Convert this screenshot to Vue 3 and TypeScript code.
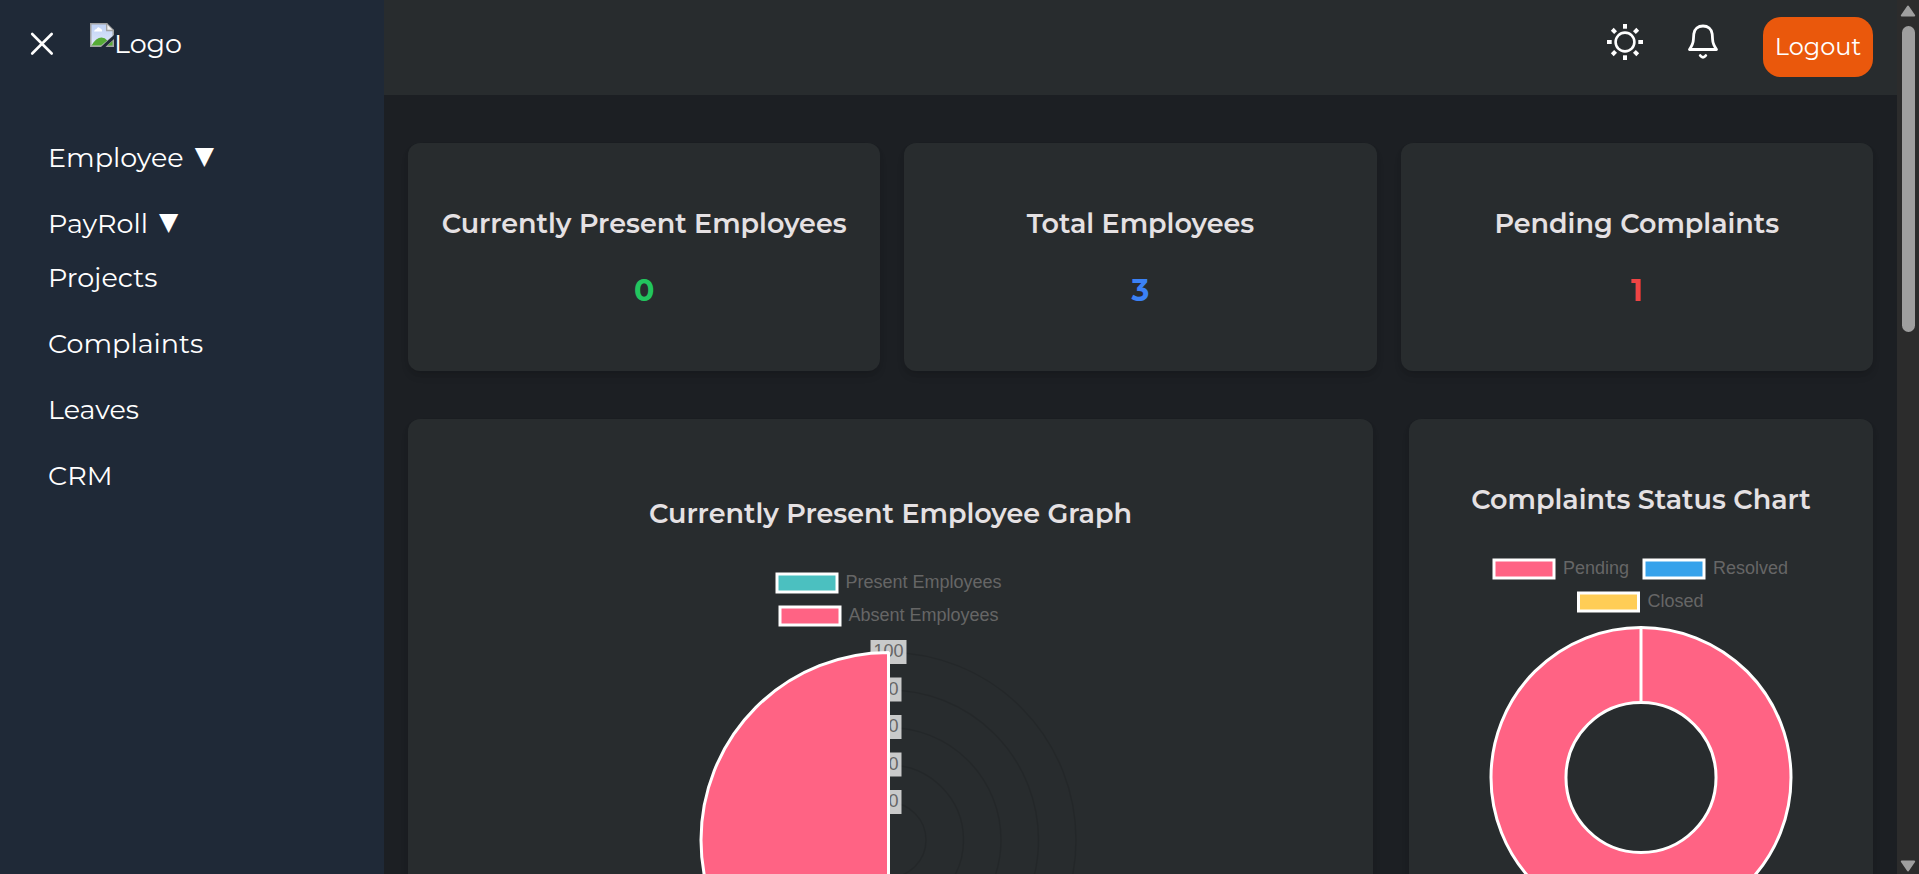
<script setup lang="ts">
interface NavItem {
  label: string
  expandable: boolean
}

interface Stat {
  title: string
  value: number
  tone: 'green' | 'blue' | 'red'
}

interface LegendEntry {
  label: string
  color: string
  x: number
  y: number
}

const navItems: NavItem[] = [
  { label: 'Employee', expandable: true },
  { label: 'PayRoll', expandable: true },
  { label: 'Projects', expandable: false },
  { label: 'Complaints', expandable: false },
  { label: 'Leaves', expandable: false },
  { label: 'CRM', expandable: false },
]

const stats: Stat[] = [
  { title: 'Currently Present Employees', value: 0, tone: 'green' },
  { title: 'Total Employees', value: 3, tone: 'blue' },
  { title: 'Pending Complaints', value: 1, tone: 'red' },
]

const attendanceLegend: LegendEntry[] = [
  { label: 'Present Employees', color: '#4bc0c0', x: 89, y: 16 },
  { label: 'Absent Employees', color: '#ff6384', x: 92, y: 49 },
]

const complaintLegend: LegendEntry[] = [
  { label: 'Pending', color: '#ff6384', x: 34, y: 16 },
  { label: 'Resolved', color: '#36a2eb', x: 184, y: 16 },
  { label: 'Closed', color: '#ffcd56', x: 118.5, y: 49 },
]

const gridRadii: number[] = [37.5, 75, 112.5, 150, 187.5]

const ticks = [100, 80, 60, 40, 20].map((value, i) => ({
  value,
  y: 94 + i * 37.5,
  width: value === 100 ? 36 : 26,
}))

const rays: number[] = [0, 45, 90, 135, 180, 225, 270, 315]
</script>

<template>
  <div class="window">
    <aside class="sidebar">
      <div class="brand">
        <svg class="close" viewBox="0 0 24 24">
          <path d="M2.200 2 L21.700 21.500 M21.700 2 L2.200 21.500" />
        </svg>
        <span class="logo">
          <svg class="broken" viewBox="0 0 24 24">
            <defs>
              <linearGradient id="sky" x1="0" y1="0" x2="0" y2="1">
                <stop offset="0" stop-color="#bfd2f5" />
                <stop offset="1" stop-color="#dfe8fa" />
              </linearGradient>
            </defs>
            <path d="M0 0H17L24 7V12L11 24H0Z" fill="#a3a3a3" />
            <path d="M1.500 1.500H16.500V8H22.500V13L11 22.500H1.500Z" fill="url(#sky)" />
            <path d="M4 8.500Q4.500 6 6.500 6Q8 3 10 5.200Q12.500 6 12 8.500Z" fill="#fff" />
            <path d="M1.500 22.500Q6 14.500 11.500 14.500Q15 14.500 17.300 17.500L11 22.500Z" fill="#57ab37" />
            <path d="M17 1.500V7H22.500Z" fill="#f3f3f3" />
            <path d="M16.700 0V7.500H24" fill="none" stroke="#a3a3a3" stroke-width="1.300" />
            <path d="M24 16V24H15.500L18 21.500Z" fill="#a3a3a3" />
            <path d="M22.500 18V22.500H17.500Z" fill="#57ab37" />
          </svg>
          <span class="alt">Logo</span>
        </span>
      </div>
      <nav class="nav">
        <a
          v-for="item in navItems"
          :key="item.label"
          class="nav-item"
          :class="{ tight: item.label === 'PayRoll' }"
        >
          <span>{{ item.label }}</span>
          <span v-if="item.expandable" class="caret">▼</span>
        </a>
      </nav>
    </aside>

    <div class="main">
      <header class="topbar">
        <svg class="sun" viewBox="-18 -18 36 36">
          <circle r="9.400" />
          <path v-for="angle in rays" :key="angle" d="M0 -13.300V-18" :transform="`rotate(${angle})`" />
        </svg>
        <svg class="bell" viewBox="0 0 30 36">
          <path
            d="M1.500 25.500H28.500C26.500 22.500 24.700 19.500 24.600 15.500L24.200 10C23.700 5 19.800 2 15 2S6.300 5 5.800 10L5.400 15.500C5.300 19.500 3.500 22.500 1.500 25.500Z"
          />
          <path d="M12.200 31.500Q15 35 17.800 31.500" />
        </svg>
        <button class="logout">Logout</button>
      </header>

      <main class="content">
        <section class="stats">
          <article v-for="stat in stats" :key="stat.title" class="card stat">
            <h2>{{ stat.title }}</h2>
            <p class="value" :class="stat.tone">{{ stat.value }}</p>
          </article>
        </section>

        <section class="charts">
          <article class="card chart-card attendance">
            <h2>Currently Present Employee Graph</h2>
            <svg class="polar" viewBox="0 0 405 500">
              <g v-for="entry in attendanceLegend" :key="entry.label">
                <rect class="swatch" :x="entry.x" :y="entry.y" width="60" height="18" :fill="entry.color" />
                <text class="label" :x="entry.x + 68.5" :y="entry.y + 14">{{ entry.label }}</text>
              </g>
              <circle v-for="r in gridRadii" :key="r" class="grid-line" cx="200.500" cy="282" :r="r" />
              <g v-for="tick in ticks" :key="tick.value">
                <rect class="tick-back" :x="200.5 - tick.width / 2" :y="tick.y - 12" :width="tick.width" height="24" />
                <text class="label tick" x="200.500" :y="tick.y + 5">{{ tick.value }}</text>
              </g>
              <path class="slice" d="M200.500 282V469.500A187.500 187.500 0 0 1 200.500 94.500Z" />
            </svg>
          </article>

          <article class="card chart-card complaints">
            <h2>Complaints Status Chart</h2>
            <svg class="doughnut" viewBox="0 0 362 400">
              <g v-for="entry in complaintLegend" :key="entry.label">
                <rect class="swatch" :x="entry.x" :y="entry.y" width="60" height="18" :fill="entry.color" />
                <text class="label" :x="entry.x + 69" :y="entry.y + 14">{{ entry.label }}</text>
              </g>
              <path
                class="slice"
                fill-rule="evenodd"
                d="M181 83.500A150 150 0 1 1 181 383.500A150 150 0 1 1 181 83.500ZM181 158.500A75 75 0 1 0 181 308.500A75 75 0 1 0 181 158.500Z"
              />
              <path class="slice" d="M181 83.500V158.500" />
            </svg>
          </article>
        </section>
      </main>
    </div>

    <div class="scrollbar">
      <svg class="arrow" viewBox="0 0 16 12"><path d="M8 1.500L14.200 10.500H1.800Z" /></svg>
      <div class="thumb"></div>
      <svg class="arrow down" viewBox="0 0 16 12"><path d="M8 10.500L14.200 1.500H1.800Z" /></svg>
    </div>
  </div>
</template>

<style>
html,
body {
  overflow: hidden;
  background: #1c1f23;
}
</style>

<style scoped>
.window {
  display: flex;
  width: 1919px;
  height: 874px;
  overflow: hidden;
  background: #1c1f23;
  color: #fff;
  font-family: Montserrat, 'Open Sans', sans-serif;
  font-size: 27px;
  line-height: 42px;
}

.sidebar {
  flex: none;
  box-sizing: border-box;
  width: 384px;
  background: #1f2937;
}

.brand {
  display: flex;
  align-items: flex-start;
  height: 114px;
  padding: 23px 0 0 30px;
}

.close {
  width: 24px;
  height: 24px;
  margin-top: 9px;
  fill: none;
  stroke: #fff;
  stroke-width: 2.6;
  stroke-linecap: round;
}

.logo {
  display: flex;
  margin-left: 36px;
}

.broken {
  width: 24px;
  height: 24px;
}

.alt {
  line-height: 41px;
}

.nav {
  display: flex;
  flex-direction: column;
  gap: 24px;
  padding-left: 48px;
}

.nav-item {
  display: flex;
  align-items: center;
  gap: 11px;
  height: 42px;
}

.nav-item.tight {
  margin-bottom: -12px;
}

.caret {
  margin-top: -4px;
  font-family: 'DejaVu Sans', sans-serif;
  font-size: 25px;
}

.main {
  flex: 1;
  min-width: 0;
}

.topbar {
  box-sizing: border-box;
  display: flex;
  align-items: flex-start;
  justify-content: flex-end;
  height: 95px;
  padding: 17px 24px 0 0;
  background: #282c2e;
}

.sun,
.bell {
  fill: none;
  stroke: #fff;
  stroke-width: 3;
  stroke-linecap: round;
  stroke-linejoin: round;
}

.sun {
  width: 36px;
  height: 36px;
  margin: 7px 45px 0 0;
  stroke-width: 2.6;
}

.sun path {
  stroke-width: 4;
  stroke-linecap: butt;
}

.bell {
  width: 30px;
  height: 36px;
  margin: 7px 45px 0 0;
}

.bell path {
  stroke-width: 2.8;
}

.logout {
  box-sizing: border-box;
  width: 110px;
  height: 60px;
  padding: 0;
  border: 0;
  border-radius: 18px;
  background: #ea580c;
  color: #fff;
  font: inherit;
  font-size: 24px;
}

.content {
  display: flex;
  flex-direction: column;
  gap: 48px;
  padding: 48px 24px 0;
}

.card {
  border-radius: 12px;
  background: #282c2e;
  box-shadow: 0 6px 9px -1px rgba(0, 0, 0, 0.1), 0 3px 6px -2px rgba(0, 0, 0, 0.1);
  color: #e5e1e3;
  text-align: center;
}

h2,
p {
  margin: 0;
}

h2 {
  font-size: 27px;
  font-weight: 600;
  line-height: 42px;
}

.stats {
  display: grid;
  grid-template-columns: repeat(3, 1fr);
  gap: 24px;
}

.stat {
  box-sizing: border-box;
  height: 228px;
  padding-top: 60px;
}

.value {
  margin-top: 24.5px;
  font-size: 30px;
  font-weight: 700;
}

.green {
  color: #22c55e;
}

.blue {
  color: #3b82f6;
}

.red {
  color: #ef4444;
}

.charts {
  display: flex;
  justify-content: space-between;
}

.chart-card {
  display: flex;
  flex-direction: column;
  align-items: center;
  box-sizing: border-box;
  height: 660px;
}

.attendance {
  width: 965px;
  padding-top: 74px;
}

.complaints {
  width: 464px;
  padding-top: 60px;
}

.polar {
  width: 405px;
  height: 500px;
  margin-top: 23px;
}

.doughnut {
  width: 362px;
  height: 400px;
  margin-top: 23px;
}

.swatch,
.slice {
  stroke: #fff;
  stroke-width: 3;
}

.slice {
  fill: #ff6384;
  stroke-linejoin: bevel;
}

.label {
  fill: #666;
  font: 18px 'Liberation Sans', Arial, sans-serif;
}

.tick {
  text-anchor: middle;
}

.tick-back {
  fill: rgba(255, 255, 255, 0.75);
}

.grid-line {
  fill: none;
  stroke: rgba(0, 0, 0, 0.1);
  stroke-width: 1.5;
}

.scrollbar {
  display: flex;
  flex: none;
  flex-direction: column;
  align-items: center;
  width: 22px;
  height: 874px;
  background: #2c2c2c;
}

.arrow {
  width: 16px;
  height: 12px;
  margin-top: 5px;
  fill: #9f9f9f;
  stroke: #9f9f9f;
  stroke-width: 2;
  stroke-linejoin: round;
}

.arrow.down {
  margin: auto 0 2px;
}

.thumb {
  width: 13px;
  height: 306px;
  margin-top: 9px;
  border-radius: 7px;
  background: #9f9f9f;
}
</style>
